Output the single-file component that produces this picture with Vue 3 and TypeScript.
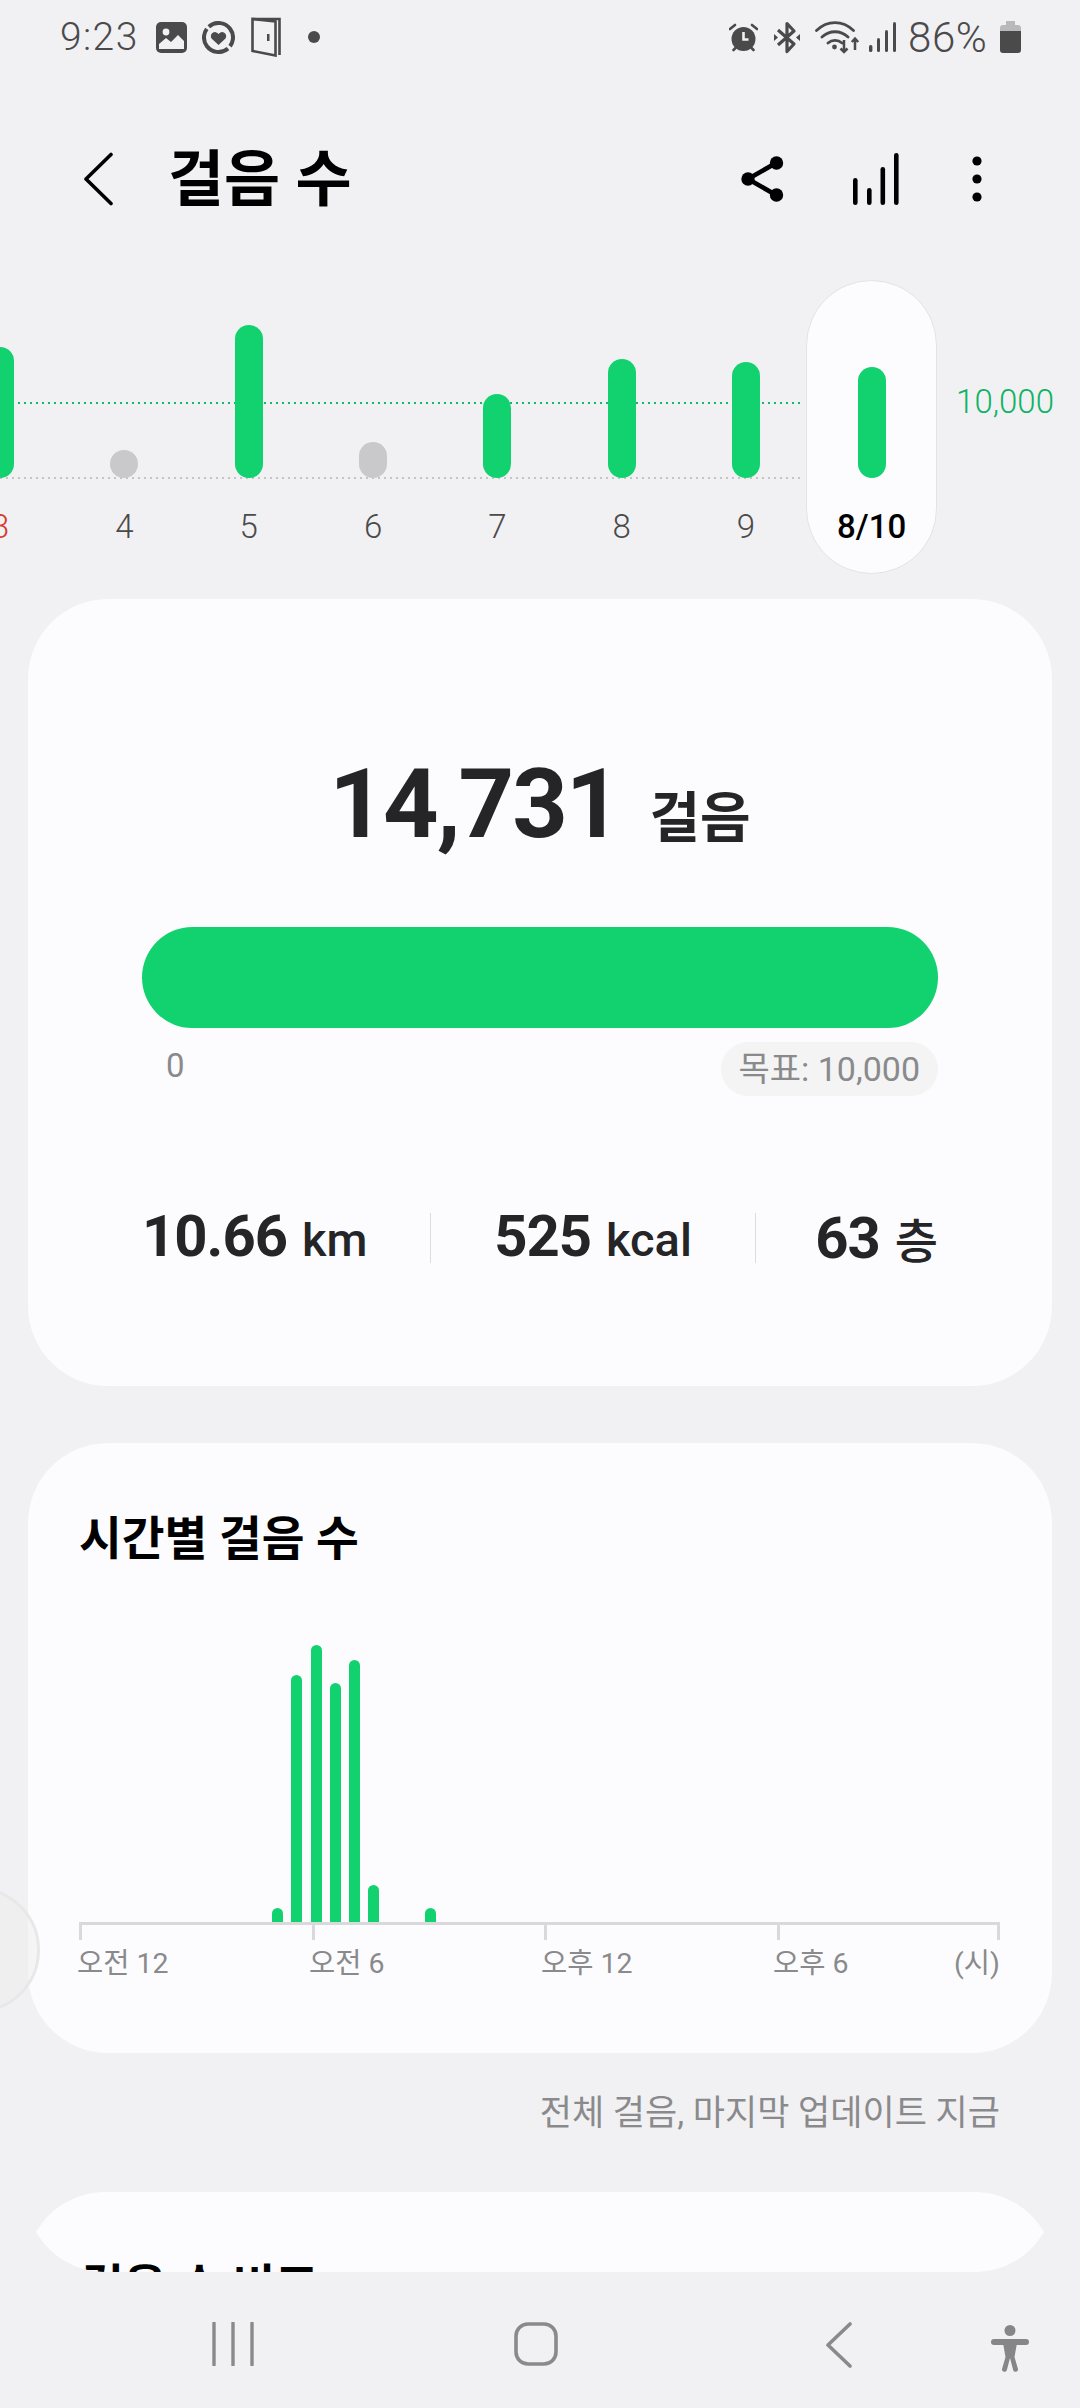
<script setup lang="ts">
interface Day {
  label: string;
  height: number;
  muted?: boolean;
  red?: boolean;
}

const days: Day[] = [
  { label: '3', height: 131, red: true },
  { label: '4', height: 28, muted: true },
  { label: '5', height: 153 },
  { label: '6', height: 36, muted: true },
  { label: '7', height: 84 },
  { label: '8', height: 119 },
  { label: '9', height: 116 },
];

// 30 minute slots, midnight to midnight
const slots: number[] = new Array(48).fill(0);
slots[10] = 14;
slots[11] = 247;
slots[12] = 277;
slots[13] = 239;
slots[14] = 262;
slots[15] = 37;
slots[18] = 14;

const axisLabels = ['오전 12', '오전 6', '오후 12', '오후 6'];
</script>

<template>
  <div class="page">
    <div class="status">
      <div class="status-left">
        <span class="time">9:23</span>
        <svg class="ic-photo" width="31" height="31" viewBox="0 0 31 31">
          <rect width="31" height="31" rx="5" fill="#4a4a4a" />
          <circle cx="10" cy="10" r="3.4" fill="#f1f1f3" />
          <path d="M3 27v-5l7-6 5 4 7-7 6 6v8z" fill="#f1f1f3" />
          <path d="M3 24.500l7-5 5 4 7-7 6 5v5H3z" fill="#f1f1f3" />
        </svg>
        <svg class="ic-ring" width="33" height="33" viewBox="0 0 33 33">
          <circle cx="16.500" cy="16.500" r="14.500" fill="none" stroke="#4a4a4a" stroke-width="4" stroke-dasharray="30 3 42 3 13 0" transform="rotate(-82 16.500 16.500)" />
          <path d="M16.500 24l-7-6.500a4 4 0 0 1 7-4.500 4 4 0 0 1 7 4.500z" fill="#4a4a4a" />
        </svg>
        <svg class="ic-door" width="30" height="40" viewBox="0 0 30 40">
          <path d="M1.500 2h27v36" fill="none" stroke="#4a4a4a" stroke-width="2.600" />
          <path d="M1.500 2v32l23 4.500V4.500z" fill="none" stroke="#4a4a4a" stroke-width="2.600" />
          <rect x="16" y="17" width="2.500" height="7" fill="#4a4a4a" />
        </svg>
        <span class="dot"></span>
      </div>
      <div class="status-right">
        <svg class="ic-alarm" width="29" height="29" viewBox="0 0 29 29">
          <circle cx="14.500" cy="16" r="12" fill="#4a4a4a" />
          <path d="M14.500 9v7.500h5" fill="none" stroke="#f1f1f3" stroke-width="2.600" />
          <path d="M1 6l5-4M28 6l-5-4M4.500 27l2-2M24.500 27l-2-2" stroke="#4a4a4a" stroke-width="2.600" stroke-linecap="round" />
        </svg>
        <svg class="ic-bt" width="26" height="33" viewBox="0 0 26 33">
          <path d="M4 9l16 14-7 7.500V2.500l7 7.500L4 24" fill="none" stroke="#4a4a4a" stroke-width="3.200" stroke-linejoin="round" />
          <path d="M0 13l4 3.500-4 3.500zM26 13l-4 3.500 4 3.500z" fill="#4a4a4a" />
        </svg>
        <svg class="ic-wifi" width="45" height="33" viewBox="0 0 45 33">
          <path d="M1.500 9.500c11-10.500 26-10.500 37 0M7 16c7.500-7 18.500-7 26 0M13 22c4-3.500 10-3.500 14 0" fill="none" stroke="#4a4a4a" stroke-width="2.800" stroke-linecap="round" />
          <circle cx="19.500" cy="26" r="2.400" fill="#4a4a4a" />
          <path d="M29 19v12M25.500 27.500l3.500 3.500 3.500-3.500M40 29V18M36.800 21l3.200-3.500 3.200 3.500" fill="none" stroke="#4a4a4a" stroke-width="2.500" />
        </svg>
        <svg class="ic-signal" width="27" height="30" viewBox="0 0 27 30">
          <rect x="0" y="23" width="3.400" height="7" rx="1.500" fill="#4a4a4a" />
          <rect x="8" y="16" width="3" height="14" rx="1.500" fill="#4a4a4a" />
          <rect x="16" y="8" width="3" height="22" rx="1.500" fill="#4a4a4a" />
          <rect x="24" y="0" width="3" height="30" rx="1.500" fill="#4a4a4a" />
        </svg>
        <span class="percent">86%</span>
        <svg class="ic-batt" width="21" height="32" viewBox="0 0 21 32">
          <path d="M6 0h9v4h3a3 3 0 0 1 3 3v3H0V7a3 3 0 0 1 3-3h3z" fill="#b9b9bb" />
          <path d="M0 10h21v19a3 3 0 0 1-3 3H3a3 3 0 0 1-3-3z" fill="#4a4a4a" />
        </svg>
      </div>
    </div>

    <header class="appbar">
      <svg class="back" width="30" height="54" viewBox="0 0 30 54">
        <path d="M27 2.500L2 27l25 24.500" fill="none" stroke="#000" stroke-width="3.600" stroke-linecap="round" stroke-linejoin="round" />
      </svg>
      <h1 class="title">걸음 수</h1>
      <svg class="share" width="43" height="46" viewBox="0 0 43 46">
        <path d="M7 23L35 7M7 23l28 16" stroke="#000" stroke-width="4.600" />
        <circle cx="7" cy="23" r="6.700" />
        <circle cx="35.500" cy="7" r="6.700" />
        <circle cx="35.500" cy="39" r="6.700" />
      </svg>
      <svg class="bars-ic" width="46" height="52" viewBox="0 0 46 52">
        <rect x="0" y="25" width="4.600" height="27" rx="2.300" />
        <rect x="14" y="35" width="4.600" height="17" rx="2.300" />
        <rect x="27.500" y="14" width="4.600" height="38" rx="2.300" />
        <rect x="41" y="0" width="4.600" height="52" rx="2.300" />
      </svg>
      <svg class="more" width="10" height="46" viewBox="0 0 10 46">
        <circle cx="5" cy="5" r="4.600" />
        <circle cx="5" cy="23" r="4.600" />
        <circle cx="5" cy="41" r="4.600" />
      </svg>
    </header>

    <section class="strip">
      <div class="line line-goal"></div>
      <div class="line line-base"></div>
      <div v-for="d in days" :key="d.label" class="day">
        <div class="plot">
          <div class="bar" :class="{ muted: d.muted }" :style="{ height: d.height + 'px' }"></div>
        </div>
        <div class="day-label" :class="{ red: d.red }">{{ d.label }}</div>
      </div>
      <div class="day today">
        <div class="plot">
          <div class="bar" style="height: 111px"></div>
        </div>
        <div class="day-label">8/10</div>
      </div>
      <div class="goal-label">10,000</div>
    </section>

    <section class="card summary">
      <div class="hero">
        <span class="hero-num">14,731</span>
        <span class="hero-unit">걸음</span>
      </div>
      <div class="progress"></div>
      <div class="range">
        <span class="range-min">0</span>
        <span class="range-goal">목표: 10,000</span>
      </div>
      <div class="stats">
        <div class="stat"><b>10.66</b><span>km</span></div>
        <i class="divider"></i>
        <div class="stat center"><b>525</b><span>kcal</span></div>
        <i class="divider"></i>
        <div class="stat end"><b>63</b><span>층</span></div>
      </div>
    </section>

    <section class="card hourly">
      <h2 class="card-title">시간별 걸음 수</h2>
      <div class="hour-bars">
        <div v-for="(h, i) in slots" :key="i" class="slot">
          <div v-if="h" class="hour-bar" :style="{ height: h + 'px' }"></div>
        </div>
      </div>
      <div class="axis">
        <i class="tick"></i><i class="tick"></i><i class="tick"></i><i class="tick"></i><i class="tick"></i>
      </div>
      <div class="axis-labels">
        <span v-for="l in axisLabels" :key="l">{{ l }}</span>
        <span class="unit">(시)</span>
      </div>
    </section>

    <p class="updated">전체 걸음, 마지막 업데이트 지금</p>

    <section class="card-peek">
      <h2 class="card-title">걸음 수 비교</h2>
    </section>

    <nav class="navbar">
      <svg class="nav-recent" width="42" height="44" viewBox="0 0 42 44">
        <path d="M2 1v42M21 1v42M40 1v42" stroke="#8a8a8a" stroke-width="3.400" stroke-linecap="round" />
      </svg>
      <svg class="nav-home" width="44" height="44" viewBox="0 0 44 44">
        <rect x="2" y="2" width="40" height="40" rx="12" fill="none" stroke="#8a8a8a" stroke-width="3.600" />
      </svg>
      <svg class="nav-back" width="26" height="46" viewBox="0 0 26 46">
        <path d="M24 2L2 23l22 21" fill="none" stroke="#8a8a8a" stroke-width="3.600" stroke-linecap="round" stroke-linejoin="round" />
      </svg>
      <svg class="nav-person" width="40" height="47" viewBox="0 0 40 47">
        <circle cx="20" cy="5.500" r="5.500" fill="#868686" />
        <path d="M4 17h32" stroke="#868686" stroke-width="6" stroke-linecap="round" />
        <path d="M13 18h14l-2.500 14 3.500 12a2.500 2.500 0 0 1-4.800 1.200L20 33l-3.200 12.200A2.500 2.500 0 0 1 12 44l3.500-12z" fill="#868686" />
      </svg>
    </nav>

    <div class="handle"></div>
  </div>
</template>

<style scoped>
.page {
  position: relative;
  width: 1080px;
  height: 2408px;
  overflow: hidden;
  background: #f1f1f3;
  font-family: Roboto, "Noto Sans CJK KR", sans-serif;
  color: #000;
}

/* status bar */
.status {
  height: 74px;
  display: flex;
  justify-content: space-between;
  align-items: center;
  padding: 0 59px 0 60px;
  color: #4a4a4a;
}
.status-left,
.status-right {
  display: flex;
  align-items: center;
}
.time {
  font-size: 39px;
  font-weight: 300;
  width: 96px;
  letter-spacing: 1.4px;
}
.ic-ring {
  margin-left: 15px;
}
.ic-door {
  margin-left: 16px;
}
.dot {
  width: 12px;
  height: 12px;
  border-radius: 50%;
  background: #4a4a4a;
  margin-left: 27px;
}
.ic-bt {
  margin-left: 16px;
}
.ic-wifi {
  margin-left: 15px;
}
.ic-signal {
  margin-left: 9px;
}
.percent {
  font-size: 42px;
  font-weight: 300;
  margin-left: 12px;
  width: 92px;
  white-space: nowrap;
  letter-spacing: 0.6px;
}
.ic-batt {
  flex: none;
}

/* app bar */
.appbar {
  box-sizing: border-box;
  height: 206px;
  display: flex;
  align-items: flex-start;
  padding: 78px 0 0 84px;
}
.title {
  margin: -11px 0 0 54px;
  font-size: 61px;
  line-height: 78px;
  font-weight: 700;
  width: 573px;
}
.share {
  margin-top: 4px;
}
.bars-ic {
  margin-left: 69px;
  margin-top: 1px;
}
.more {
  margin-left: 73px;
  margin-top: 4px;
}

/* weekly strip */
.strip {
  position: relative;
  height: 294px;
  display: flex;
  margin-left: -62px;
}
.line {
  position: absolute;
  left: 62px;
  width: 804px;
  height: 2px;
}
.line-goal {
  top: 122px;
  background: repeating-linear-gradient(90deg, #13b86a 0 2px, transparent 2px 6px);
}
.line-base {
  top: 197px;
  background: repeating-linear-gradient(90deg, #c4c4c6 0 2px, transparent 2px 6px);
}
.day {
  position: relative;
  flex: none;
  width: 124.3px;
  display: flex;
  flex-direction: column;
  align-items: center;
}
.plot {
  height: 198px;
  display: flex;
  align-items: flex-end;
}
.bar {
  width: 28px;
  border-radius: 14px;
  background: #12d16f;
}
.bar.muted {
  background: #c9c9cb;
}
.day-label {
  margin-top: 24px;
  font-size: 33px;
  font-weight: 300;
  line-height: 50px;
  color: #4a4a4a;
}
.day-label.red {
  color: #d5392f;
}
.today {
  width: 131px;
  margin-left: -2px;
  box-sizing: border-box;
  background: #fcfcfe;
  border: 1.5px solid #e3e3e5;
  border-radius: 66px;
}
.today .plot {
  height: 196.5px;
}
.today .day-label {
  color: #000;
  font-weight: 500;
}
.goal-label {
  margin: 102px 0 0 19px;
  font-size: 33px;
  font-weight: 300;
  line-height: 40px;
  color: #0fb365;
}

/* summary card */
.card {
  margin: 0 28px;
  background: #fcfcfe;
  border-radius: 80px;
}
.summary {
  margin-top: 25px;
  height: 787px;
  box-sizing: border-box;
  padding: 150px 114px 0;
}
.hero {
  display: flex;
  justify-content: center;
  align-items: baseline;
  gap: 30px;
  color: #252527;
}
.hero-num {
  font-size: 97px;
  line-height: 110px;
  font-weight: 700;
  letter-spacing: -2px;
}
.hero-unit {
  font-size: 55px;
  font-weight: 700;
  line-height: 60px;
}
.progress {
  margin-top: 68px;
  height: 101px;
  border-radius: 51px;
  background: #12d16f;
}
.range {
  margin-top: 14px;
  display: flex;
  justify-content: space-between;
  color: #8a8a8c;
  font-size: 33px;
}
.range-min {
  margin-left: 24px;
  line-height: 48px;
}
.range-goal {
  height: 54px;
  line-height: 54px;
  padding: 0 18px;
  border-radius: 27px;
  background: #f4f4f5;
  font-size: 34px;
}
.stats {
  margin-top: 107px;
  display: grid;
  grid-template-columns: 288px 1px 324px 1px 1fr;
  align-items: center;
  color: #252527;
}
.stat {
  display: flex;
  align-items: baseline;
  gap: 15px;
}
.stat.center {
  justify-content: center;
}
.stat.end {
  justify-content: flex-end;
}
.stat b {
  font-size: 58px;
  font-weight: 700;
  line-height: 56px;
  letter-spacing: -1px;
}
.stat span {
  font-size: 47px;
  font-weight: 500;
}
.divider {
  width: 1px;
  height: 50px;
  background: #dcdcde;
}

/* hourly card */
.hourly {
  margin-top: 57px;
  height: 610px;
  box-sizing: border-box;
  padding: 63px 51px 0;
}
.card-title {
  margin: 0;
  font-size: 46.5px;
  line-height: 66px;
  font-weight: 700;
}
.hour-bars {
  margin-top: 56px;
  height: 294px;
  display: flex;
  align-items: flex-end;
  width: 918px;
}
.slot {
  flex: 1 1 0;
  padding-left: 2px;
}
.hour-bar {
  width: 11px;
  border-radius: 6px 6px 0 0;
  background: #12d16f;
}
.axis {
  width: 921px;
  height: 15px;
  border-top: 3px solid #d9d9db;
  display: grid;
  grid-template-columns: 232.5px 232.5px 232.5px 1fr auto;
}
.tick {
  width: 3px;
  height: 15px;
  background: #d9d9db;
}
.axis-labels {
  width: 923px;
  display: grid;
  grid-template-columns: 232px 232px 232px 1fr auto;
  margin: 2px 0 0 -2px;
  font-size: 28.5px;
  line-height: 44px;
  color: #8a8a8c;
}

.updated {
  margin: 36px 80px 0 0;
  text-align: right;
  font-size: 35px;
  line-height: 50px;
  color: #8a8a8c;
}

/* next card, cut off by the nav bar */
.card-peek {
  margin: 53px 28px 0;
  height: 80px;
  box-sizing: border-box;
  padding: 62px 0 0 53px;
  overflow: hidden;
  background: #fcfcfe;
  clip-path: path("M76 0H948A80 80 0 0 1 1016 40A80 80 0 0 1 948 80H76A80 80 0 0 1 8 40A80 80 0 0 1 76 0Z");
}

/* nav bar */
.navbar {
  display: flex;
  align-items: flex-start;
  padding: 50px 0 0 212px;
}
.nav-home {
  margin-left: 260px;
}
.nav-back {
  margin-left: 268px;
}
.nav-person {
  margin-left: 138px;
  margin-top: 3px;
}

.handle {
  position: absolute;
  left: -86px;
  top: 1887px;
  width: 126px;
  height: 126px;
  box-sizing: border-box;
  border-radius: 50%;
  border: 3px solid #e8e8e8;
  background: rgba(238, 238, 238, 0.45);
}
</style>

<style>
html,
body {
  margin: 0;
  background: #f1f1f3;
}
</style>
